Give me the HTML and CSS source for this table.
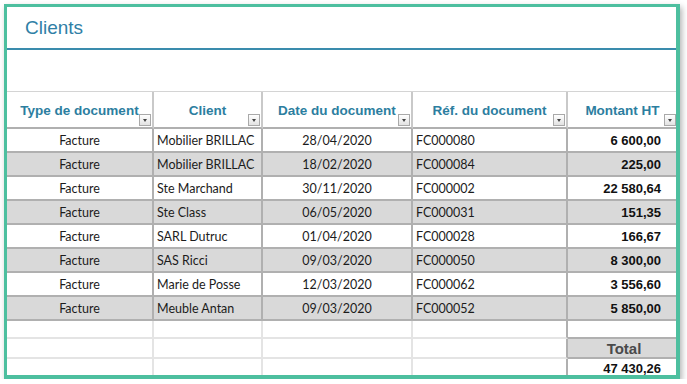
FILE: index.html
```html
<!DOCTYPE html>
<html lang="fr">
<head>
    <meta charset="UTF-8">
    <meta name="viewport" content="width=device-width, initial-scale=1.0">
    <title>Clients</title>
    <link rel="stylesheet" href="styles.css">
</head>
<body>
    <div class="sheet">
        <div class="sheet-title">
            <h1>Clients</h1>
        </div>
        <div class="sheet-gap"></div>

        <table class="docs">
            <colgroup>
                <col class="c-type">
                <col class="c-client">
                <col class="c-date">
                <col class="c-ref">
                <col class="c-amount">
            </colgroup>
            <thead>
                <tr>
                    <th>Type de document<span class="filter"></span></th>
                    <th>Client<span class="filter"></span></th>
                    <th>Date du document<span class="filter"></span></th>
                    <th>Réf. du document<span class="filter"></span></th>
                    <th>Montant HT<span class="filter"></span></th>
                </tr>
            </thead>
            <tbody>
                <tr>
                    <td class="center">Facture</td>
                    <td>Mobilier BRILLAC</td>
                    <td class="center">28/04/2020</td>
                    <td>FC000080</td>
                    <td class="amount">6 600,00</td>
                </tr>
                <tr>
                    <td class="center">Facture</td>
                    <td>Mobilier BRILLAC</td>
                    <td class="center">18/02/2020</td>
                    <td>FC000084</td>
                    <td class="amount">225,00</td>
                </tr>
                <tr>
                    <td class="center">Facture</td>
                    <td>Ste Marchand</td>
                    <td class="center">30/11/2020</td>
                    <td>FC000002</td>
                    <td class="amount">22 580,64</td>
                </tr>
                <tr>
                    <td class="center">Facture</td>
                    <td>Ste Class</td>
                    <td class="center">06/05/2020</td>
                    <td>FC000031</td>
                    <td class="amount">151,35</td>
                </tr>
                <tr>
                    <td class="center">Facture</td>
                    <td>SARL Dutruc</td>
                    <td class="center">01/04/2020</td>
                    <td>FC000028</td>
                    <td class="amount">166,67</td>
                </tr>
                <tr>
                    <td class="center">Facture</td>
                    <td>SAS Ricci</td>
                    <td class="center">09/03/2020</td>
                    <td>FC000050</td>
                    <td class="amount">8 300,00</td>
                </tr>
                <tr>
                    <td class="center">Facture</td>
                    <td>Marie de Posse</td>
                    <td class="center">12/03/2020</td>
                    <td>FC000062</td>
                    <td class="amount">3 556,60</td>
                </tr>
                <tr>
                    <td class="center">Facture</td>
                    <td>Meuble Antan</td>
                    <td class="center">09/03/2020</td>
                    <td>FC000052</td>
                    <td class="amount">5 850,00</td>
                </tr>
            </tbody>
            <tfoot>
                <tr class="blank-1">
                    <td></td><td></td><td></td><td></td>
                    <td class="sum-space"></td>
                </tr>
                <tr class="blank-2">
                    <td></td><td></td><td></td><td></td>
                    <td class="sum-label">Total</td>
                </tr>
                <tr class="blank-3">
                    <td></td><td></td><td></td><td></td>
                    <td class="sum-value">47 430,26</td>
                </tr>
            </tfoot>
        </table>
    </div>
</body>
</html>
```

FILE: styles.css
```css
:root {
    --frame-color: #4dbf9f;
    --title-color: #2f80a6;
    --rule-color: #3a8cad;
    --head-color: #2c7ea0;
    --grid-color: #b0b0b0;
    --grid-light: #e4e4e4;
    --band-color: #d9d9d9;
    --text-color: #1c1c1c;
}

* {
    box-sizing: border-box;
    margin: 0;
    padding: 0;
}

body {
    background: #ffffff;
    font-family: 'Liberation Sans', Arial, sans-serif;
    color: var(--text-color);
}

.sheet {
    width: 676px;
    height: 375px;
    margin: 4px 0 0 4px;
    background: white;
    border-style: solid;
    border-color: var(--frame-color);
    border-width: 3px 4px 4px 3px;
    box-shadow: 2px 3px 6px rgba(0, 0, 0, 0.3);
    overflow: hidden;
}

.sheet-title {
    height: 43px;
    display: flex;
    align-items: center;
    padding-left: 18px;
    border-bottom: 2px solid var(--rule-color);
}

.sheet-title h1 {
    font-size: 19px;
    font-weight: 400;
    color: var(--title-color);
}

.sheet-gap {
    height: 41px;
}

.docs {
    width: 670px;
    table-layout: fixed;
    border-collapse: separate;
    border-spacing: 0;
    border-top: 1px solid #d4d4d4;
}

.c-type { width: 147px; }
.c-client { width: 109px; }
.c-date { width: 150px; }
.c-ref { width: 155px; }
.c-amount { width: 109px; }

.docs th {
    position: relative;
    height: 37px;
    font-size: 13.5px;
    font-weight: 700;
    color: var(--head-color);
    text-align: center;
    white-space: nowrap;
    border-right: 2px solid #c9c9c9;
    border-bottom: 2px solid var(--grid-color);
    padding-top: 2px;
}

.filter {
    position: absolute;
    right: 1px;
    bottom: 1px;
    width: 12px;
    height: 12px;
    border: 1px solid #a9a9a9;
    background: linear-gradient(#ffffff, #e2e2e2);
}

.filter::after {
    content: '';
    position: absolute;
    left: 3px;
    top: 4px;
    border-left: 2.5px solid transparent;
    border-right: 2.5px solid transparent;
    border-top: 3px solid #444;
}

.docs td {
    height: 24px;
    padding: 0 3px;
    font-family: 'Lato', 'Liberation Sans', sans-serif;
    font-size: 12.5px;
    white-space: nowrap;
    overflow: hidden;
    border-right: 2px solid var(--grid-color);
    border-bottom: 2px solid var(--grid-color);
}

.docs th:last-child,
.docs td:last-child {
    border-right: none;
}

.docs tbody tr:nth-child(even) td {
    background: var(--band-color);
}

.center {
    text-align: center;
}

.docs td.amount {
    text-align: right;
    padding-right: 16px;
    font-family: 'Liberation Sans', Arial, sans-serif;
    font-size: 13px;
    font-weight: 700;
    color: #111;
}

.docs tfoot td {
    border-right-color: var(--grid-light);
    border-bottom-color: var(--grid-light);
}

.docs tfoot td:nth-child(4) {
    border-right-color: var(--grid-color);
}

.docs tfoot .blank-1 td { height: 18px; }
.docs tfoot .blank-2 td { height: 20px; }
.docs tfoot .blank-3 td { height: 17px; border-bottom: none; }

.docs tfoot td.sum-space {
    border-bottom-color: var(--grid-color);
}

.docs tfoot td.sum-label {
    background: var(--band-color);
    border-bottom-color: var(--grid-color);
    text-align: center;
    font-family: 'Liberation Sans', Arial, sans-serif;
    font-size: 15px;
    font-weight: 700;
    color: #4a4a4a;
    padding-left: 6px;
}

.docs tfoot td.sum-value {
    text-align: right;
    padding-right: 16px;
    font-family: 'Liberation Sans', Arial, sans-serif;
    font-size: 13px;
    font-weight: 700;
    color: #111;
    vertical-align: bottom;
    line-height: 15px;
}
```
